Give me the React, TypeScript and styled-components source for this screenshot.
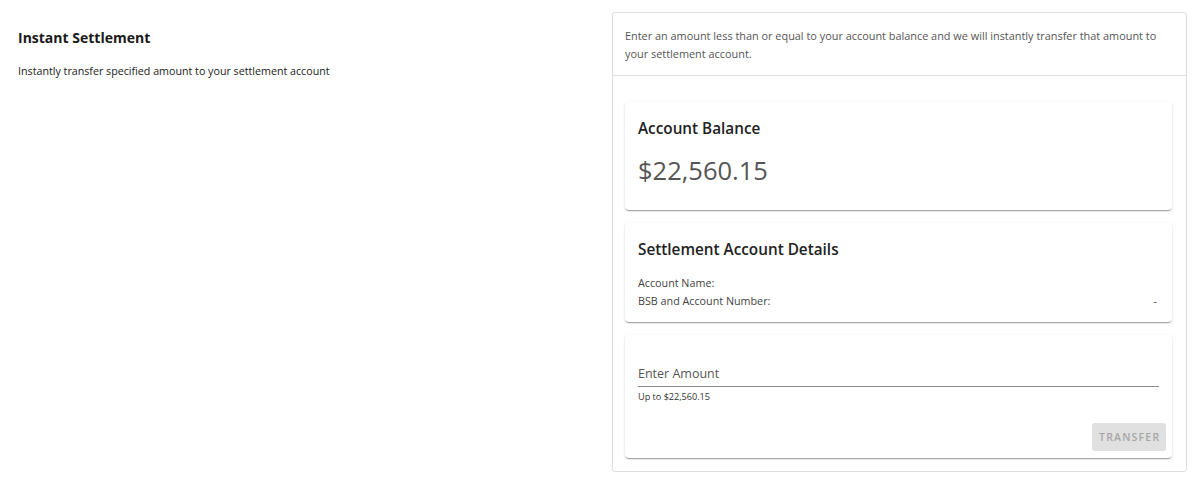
import styled, { createGlobalStyle } from "styled-components";

const GlobalStyle = createGlobalStyle`
  body {
    margin: 0;
    background: #fff;
    font-family: "Open Sans", "Noto Sans", sans-serif;
    color: #222;
  }
`

const Page = styled.div`
  display: flex;
  justify-content: space-between;
  padding: 12px 16px 8px 18px;
`

const Intro = styled.div`
  padding-top: 16px;
`

const Title = styled.h2`
  margin: 0;
  font-size: 14px;
  font-weight: 700;
  color: #1a1a1a;
`

const Subtitle = styled.p`
  margin: 17px 0 0;
  font-size: 10.7px;
  color: #222;
`

const Panel = styled.div`
  width: 573px;
  border: 1px solid #dedede;
  border-radius: 3px;
`

const PanelHeader = styled.div`
  padding: 14px 12px 12px;
  font-size: 10.9px;
  line-height: 18px;
  color: #555;
  border-bottom: 1px solid #dedede;
`

const PanelBody = styled.div`
  display: flex;
  flex-direction: column;
  gap: 13px;
  padding: 26px 14px 13px 12px;
`

const Card = styled.div<{ $pad?: string }>`
  background: #fff;
  border-radius: 4px;
  padding: ${p => p.$pad || "16px 13px"};
  box-shadow: 0 2px 1px -1px rgba(0,0,0,0.2), 0 1px 1px 0 rgba(0,0,0,0.14), 0 1px 3px 0 rgba(0,0,0,0.12);
`

const CardTitle = styled.h3`
  margin: 0;
  font-size: 15.3px;
  font-weight: 600;
  color: #222;
  line-height: 20px;
`

const Balance = styled.div`
  margin-top: 16px;
  margin-bottom: 8px;
  font-size: 25.5px;
  font-weight: 400;
  color: #555;
  line-height: 32px;
`

const DetailList = styled.div`
  margin-top: 15px;
  display: flex;
  flex-direction: column;
`

const DetailRow = styled.div`
  display: flex;
  justify-content: space-between;
  font-size: 10.75px;
  line-height: 18px;
  color: #444;
  padding-right: 2px;
`

const Field = styled.div`
  margin-top: 16px;
  border-bottom: 1px solid #8a8a8a;
  padding-bottom: 4px;
  font-size: 12.5px;
  color: #555;
`

const Helper = styled.div`
  margin-top: 4px;
  font-size: 9.1px;
  line-height: 12px;
  color: #333;
`

const Actions = styled.div`
  display: flex;
  justify-content: flex-end;
  margin-top: 20px;
  margin-right: -7px;
`

const TransferButton = styled.button`
  border: none;
  border-radius: 3px;
  background: #e0e0e0;
  color: #a6a6a6;
  font-family: inherit;
  font-size: 10.5px;
  font-weight: 600;
  letter-spacing: 1.2px;
  padding: 0 7px;
  height: 28px;
  width: 74px;
  cursor: default;
`

const App = () => {
    return (
        <>
            <GlobalStyle/>
            <Page>
                <Intro>
                    <Title>Instant Settlement</Title>
                    <Subtitle>Instantly transfer specified amount to your settlement account</Subtitle>
                </Intro>
                <Panel>
                    <PanelHeader>
                        Enter an amount less than or equal to your account balance and we will instantly transfer that amount to your settlement account.
                    </PanelHeader>
                    <PanelBody>
                        <Card>
                            <CardTitle>Account Balance</CardTitle>
                            <Balance>$22,560.15</Balance>
                        </Card>
                        <Card $pad="16px 13px 12px">
                            <CardTitle>Settlement Account Details</CardTitle>
                            <DetailList>
                                <DetailRow><span>Account Name:</span><span></span></DetailRow>
                                <DetailRow><span>BSB and Account Number:</span><span>-</span></DetailRow>
                            </DetailList>
                        </Card>
                        <Card $pad="14px 13px 7px">
                            <Field>Enter Amount</Field>
                            <Helper>Up to $22,560.15</Helper>
                            <Actions>
                                <TransferButton disabled>TRANSFER</TransferButton>
                            </Actions>
                        </Card>
                    </PanelBody>
                </Panel>
            </Page>
        </>
    )
}

export default App;
